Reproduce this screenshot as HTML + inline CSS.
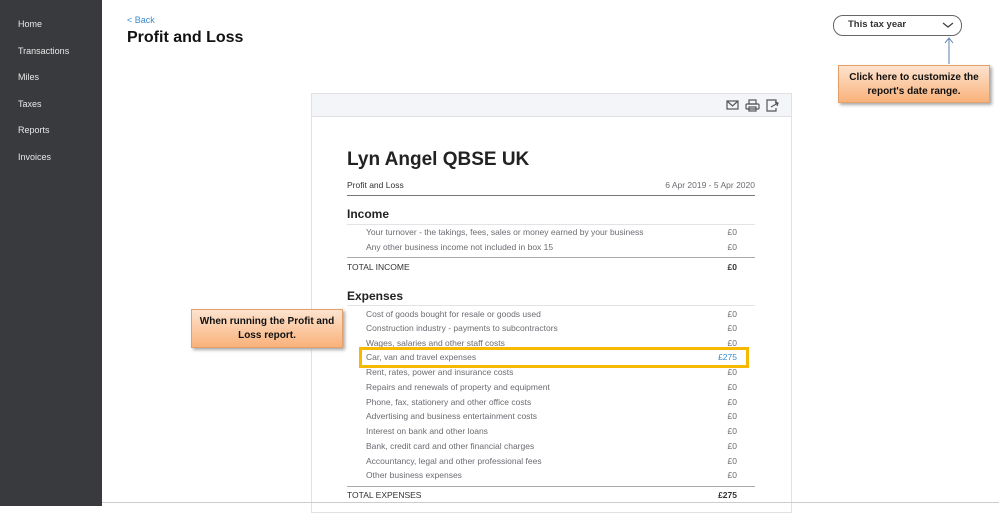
<!DOCTYPE html>
<html><head><style>
*{margin:0;padding:0;box-sizing:border-box}
body{width:999px;height:506px;overflow:hidden;background:#fff;font-family:"Liberation Sans",sans-serif;position:relative;color:#393a3d}
.a{position:absolute;white-space:nowrap}
.side{left:0;top:0;width:102px;height:506px;background:#393a3d}
.nav{left:18px;color:#e8e8e8;font-size:9px}
.r{font-size:8.5px;color:#6b6c72}
.amt{font-size:8.5px;color:#6b6c72;right:262px;text-align:right}
.line{height:1px;background:#e2e3e6}
.call{background:linear-gradient(#fde3cf,#f9b27a);border:1px solid #e4a06a;box-shadow:2px 2px 3px #aaa;font-family:"Liberation Sans",sans-serif;font-weight:bold;font-size:10px;color:#111;text-align:center;line-height:14px;padding-top:5px;white-space:normal}
</style></head><body>
<div class="a side"></div>
<div class="a nav" style="top:19px">Home</div>
<div class="a nav" style="top:46px">Transactions</div>
<div class="a nav" style="top:72px">Miles</div>
<div class="a nav" style="top:99px">Taxes</div>
<div class="a nav" style="top:125px">Reports</div>
<div class="a nav" style="top:152px">Invoices</div>
<div class="a" style="left:127px;top:15px;font-size:9px;color:#3a8bd1">&lt; Back</div>
<div class="a" style="left:127px;top:29px;font-size:16px;font-weight:bold;color:#111">Profit and Loss</div>
<div class="a" style="left:833px;top:15px;width:129px;height:21px;border:1.5px solid #666;border-radius:10px"></div>
<div class="a" style="left:848px;top:19px;font-size:9.5px;font-weight:bold;color:#333">This tax year</div>
<svg class="a" style="left:942px;top:21px" width="12" height="8"><path d="M1 2 L6 6 L11 2" fill="none" stroke="#444" stroke-width="1.3"/></svg>
<svg class="a" style="left:943px;top:37px" width="12" height="28"><path d="M6 27 V2 M2 6 L6 1 L10 6" fill="none" stroke="#5a7fb0" stroke-width="1"/></svg>
<div class="a call" style="left:838px;top:65px;width:152px;height:38px">Click here to customize the report's date range.</div>

<div class="a" style="left:311px;top:93px;width:481px;height:420px;border:1px solid #dfe1e5;background:#fff"></div>
<div class="a" style="left:312px;top:94px;width:479px;height:23px;background:#f4f5f8;border-bottom:1px solid #dfe1e5"></div>
<svg class="a" style="left:726px;top:99px" width="56" height="14" fill="none" stroke="#555" stroke-width="1.2">
<rect x="1" y="2" width="11" height="8"/><path d="M1 2 L6.5 7 L12 2"/>
<rect x="23" y="1" width="7" height="4"/><rect x="20" y="5" width="13" height="5" rx="1"/><rect x="23" y="8" width="7" height="4"/>
<path d="M50 5 V1 H41 V12 H50 V9"/><path d="M45 8 L52 4 M49 3 L52 4 L51 7"/>
</svg>
<div class="a" style="left:347px;top:149px;font-size:19px;font-weight:bold;color:#222">Lyn Angel QBSE UK</div>
<div class="a" style="left:347px;top:180px;font-size:8.5px;color:#333">Profit and Loss</div>
<div class="a r" style="right:244px;top:180px">6 Apr 2019 - 5 Apr 2020</div>
<div class="a" style="left:347px;top:195px;width:408px;height:1px;background:#777"></div>
<div class="a" style="left:347px;top:207px;font-size:12px;font-weight:bold;color:#222">Income</div>
<div class="a line" style="left:347px;top:224px;width:408px"></div>
<div class="a r" style="left:366px;top:227px">Your turnover - the takings, fees, sales or money earned by your business</div><div class="a amt" style="top:227px">£0</div>
<div class="a r" style="left:366px;top:242px">Any other business income not included in box 15</div><div class="a amt" style="top:242px">£0</div>
<div class="a" style="left:347px;top:257px;width:408px;height:1px;background:#aaa"></div>
<div class="a" style="left:347px;top:262px;font-size:8.5px;color:#333">TOTAL INCOME</div><div class="a amt" style="top:262px;color:#333;font-weight:bold">£0</div>
<div class="a" style="left:347px;top:289px;font-size:12px;font-weight:bold;color:#222">Expenses</div>
<div class="a line" style="left:347px;top:305px;width:408px"></div>
<div class="a r" style="left:366px;top:309px">Cost of goods bought for resale or goods used</div><div class="a amt" style="top:309px">£0</div>
<div class="a r" style="left:366px;top:323px">Construction industry - payments to subcontractors</div><div class="a amt" style="top:323px">£0</div>
<div class="a r" style="left:366px;top:338px">Wages, salaries and other staff costs</div><div class="a amt" style="top:338px">£0</div>
<div class="a r" style="left:366px;top:352px">Car, van and travel expenses</div><div class="a amt" style="top:352px;color:#3a8bd1">£275</div>
<div class="a r" style="left:366px;top:367px">Rent, rates, power and insurance costs</div><div class="a amt" style="top:367px">£0</div>
<div class="a r" style="left:366px;top:382px">Repairs and renewals of property and equipment</div><div class="a amt" style="top:382px">£0</div>
<div class="a r" style="left:366px;top:397px">Phone, fax, stationery and other office costs</div><div class="a amt" style="top:397px">£0</div>
<div class="a r" style="left:366px;top:411px">Advertising and business entertainment costs</div><div class="a amt" style="top:411px">£0</div>
<div class="a r" style="left:366px;top:426px">Interest on bank and other loans</div><div class="a amt" style="top:426px">£0</div>
<div class="a r" style="left:366px;top:441px">Bank, credit card and other financial charges</div><div class="a amt" style="top:441px">£0</div>
<div class="a r" style="left:366px;top:456px">Accountancy, legal and other professional fees</div><div class="a amt" style="top:456px">£0</div>
<div class="a r" style="left:366px;top:470px">Other business expenses</div><div class="a amt" style="top:470px">£0</div>
<div class="a" style="left:347px;top:486px;width:408px;height:1px;background:#aaa"></div>
<div class="a" style="left:347px;top:490px;font-size:8.5px;color:#333">TOTAL EXPENSES</div><div class="a amt" style="top:490px;color:#333;font-weight:bold">£275</div>
<div class="a" style="left:102px;top:502px;width:897px;height:1px;background:#ccc"></div>
<div class="a" style="left:359px;top:347px;width:390px;height:21px;border:3px solid #f6b900"></div>
<div class="a call" style="left:191px;top:309px;width:152px;height:39px">When running the Profit and Loss report.</div>
</body></html>
